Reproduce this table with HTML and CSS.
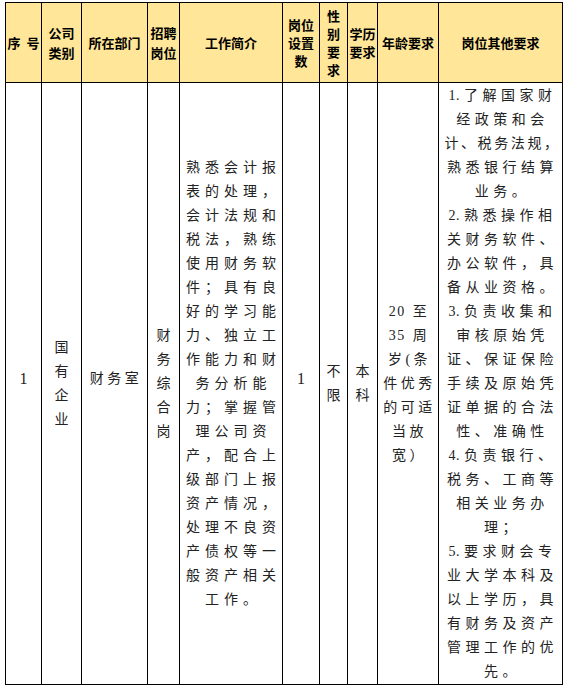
FILE: index.html
```html
<!DOCTYPE html>
<html lang="zh">
<head>
<meta charset="utf-8">
<link rel="stylesheet" href="styles.css">
</head>
<body>
<table class="jobs">
  <colgroup>
    <col class="w-no"><col class="w-type"><col class="w-dept"><col class="w-post"><col class="w-desc">
    <col class="w-num"><col class="w-sex"><col class="w-edu"><col class="w-age"><col class="w-other">
  </colgroup>
  <thead>
    <tr class="head">
      <th>序&nbsp;&nbsp;号</th>
      <th class="lh20">公司<br>类别</th>
      <th>所在部门</th>
      <th class="lh20">招聘<br>岗位</th>
      <th>工作简介</th>
      <th>岗位<br>设置<br>数</th>
      <th>性<br>别<br>要<br>求</th>
      <th>学历<br>要求</th>
      <th>年龄要求</th>
      <th>岗位其他要求</th>
    </tr>
  </thead>
  <tbody>
    <tr class="row">
      <td class="num">1</td>
      <td>国<br>有<br>企<br>业</td>
      <td class="sp4">财务室</td>
      <td>财<br>务<br>综<br>合<br>岗</td>
      <td class="desc">熟悉会计报<br>表的处理，<br>会计法规和<br>税法，熟练<br>使用财务软<br>件；具有良<br>好的学习能<br>力、独立工<br>作能力和财<br>务分析能<br>力；掌握管<br>理公司资<br>产，配合上<br>级部门上报<br>资产情况，<br>处理不良资<br>产债权等一<br>般资产相关<br>工作。</td>
      <td class="num">1</td>
      <td>不<br>限</td>
      <td>本<br>科</td>
      <td class="age"><span class="dig">20</span> 至<br><span class="dig">35</span> 周<br>岁(条<br>件优秀<br>的可适<br>当放<br>宽）</td>
      <td class="other"><span class="idx">1. </span>了解国家财<br>经政策和会<br><span class="tight">计、税务法规，</span><br>熟悉银行结算<br>业务。<br><span class="idx">2. </span>熟悉操作相<br>关财务软件、<br>办公软件，具<br>备从业资格。<br><span class="idx">3. </span>负责收集和<br>审核原始凭<br>证、保证保险<br>手续及原始凭<br>证单据的合法<br>性、准确性<br><span class="idx">4. </span>负责银行、<br>税务、工商等<br>相关业务办<br>理；<br><span class="idx">5. </span>要求财会专<br>业大学本科及<br>以上学历，具<br>有财务及资产<br>管理工作的优<br>先。</td>
    </tr>
  </tbody>
</table>
</body>
</html>
```

FILE: styles.css
```css
html, body {
  margin: 0;
  padding: 0;
  background: #ffffff;
}

.jobs {
  margin: 2px 0 0 5px;
  border-collapse: collapse;
  table-layout: fixed;
  width: 557px;
}

.w-no { width: 36px; }
.w-type { width: 40px; }
.w-dept { width: 66px; }
.w-post { width: 32px; }
.w-desc { width: 103px; }
.w-num { width: 37px; }
.w-sex { width: 28px; }
.w-edu { width: 30px; }
.w-age { width: 61px; }
.w-other { width: 124px; }

.jobs th,
.jobs td {
  border: 1.5px solid #000;
  padding: 0;
  text-align: center;
  vertical-align: middle;
  overflow: visible;
}

.head {
  height: 80px;
  background: #ffe699;
}

.head th {
  font-family: "Noto Sans CJK SC", sans-serif;
  font-weight: 700;
  font-size: 13px;
  line-height: 18px;
  color: #000;
  white-space: nowrap;
}

.head th.lh20 {
  line-height: 20px;
}

.row {
  height: 602px;
}

.row td {
  font-family: "Liberation Serif", "Noto Sans CJK SC", serif;
  font-size: 14px;
  line-height: 24px;
  color: #222;
  white-space: nowrap;
}

.row td.num {
  font-size: 16px;
  padding-bottom: 10px;
}

.row td.sp4 {
  letter-spacing: 3.5px;
  padding-left: 3px;
  padding-bottom: 10px;
}

.row td.desc {
  letter-spacing: 5px;
  padding-left: 5px;
}

.row td.age {
  letter-spacing: 3.5px;
  padding-left: 3px;
}

.row td.age .dig {
  letter-spacing: 1.5px;
}

.row td.other {
  letter-spacing: 4.5px;
  padding-left: 4px;
}

.row td.other .idx {
  letter-spacing: 0.5px;
}

.row td.other .tight {
  letter-spacing: 2.6px;
}
```
